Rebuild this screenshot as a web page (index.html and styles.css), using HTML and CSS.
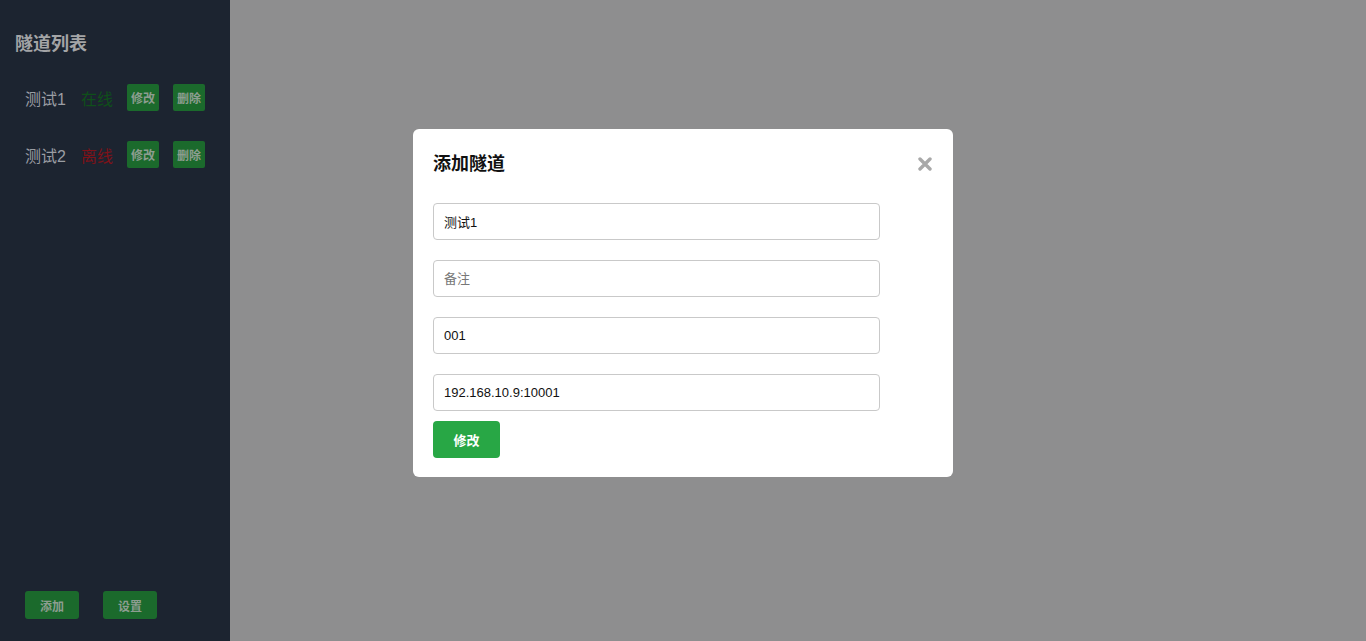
FILE: index.html
```html
<!DOCTYPE html>
<html lang="zh">
<head>
<meta charset="utf-8">
<title>隧道列表</title>
<link rel="stylesheet" href="styles.css">
</head>
<body>
<div class="app">
  <aside class="sidebar">
    <h2 class="side-title">隧道列表</h2>
    <ul class="tunnel-list">
      <li class="tunnel">
        <span class="tunnel-name">测试1</span>
        <span class="status online">在线</span>
        <button class="btn-sm">修改</button>
        <button class="btn-sm">删除</button>
      </li>
      <li class="tunnel">
        <span class="tunnel-name">测试2</span>
        <span class="status offline">离线</span>
        <button class="btn-sm">修改</button>
        <button class="btn-sm">删除</button>
      </li>
    </ul>
    <div class="side-footer">
      <button class="btn-foot">添加</button>
      <button class="btn-foot">设置</button>
    </div>
  </aside>
  <main class="main"></main>
</div>

<div class="overlay">
  <div class="modal">
    <div class="modal-head">
      <h3 class="modal-title">添加隧道</h3>
      <svg class="close" width="14" height="14" viewBox="0 0 14 14" aria-label="关闭">
        <path d="M2 2 L12 12 M12 2 L2 12" stroke="#a8a8a8" stroke-width="3.4" stroke-linecap="round"/>
      </svg>
    </div>
    <form class="modal-form">
      <input class="field" type="text" value="测试1">
      <input class="field" type="text" placeholder="备注">
      <input class="field" type="text" value="001">
      <input class="field" type="text" value="192.168.10.9:10001">
      <button type="button" class="btn-primary">修改</button>
    </form>
  </div>
</div>
</body>
</html>
```
FILE: styles.css
```css
* { box-sizing: border-box; }
html, body { margin: 0; padding: 0; height: 100%; }
body {
  font-family: "Liberation Sans", Arial, "Noto Sans CJK SC", sans-serif;
  background: #8e8e8f;
}
.app {
  display: flex;
  height: 100vh;
}
.sidebar {
  width: 230px;
  background: #1c2430;
  display: flex;
  flex-direction: column;
  padding: 32px 0 22px 15px;
}
.side-title {
  margin: 0;
  font-size: 18px;
  line-height: 24px;
  font-weight: bold;
  color: #a3a4a6;
}
.tunnel-list {
  list-style: none;
  margin: 0;
  padding: 28px 0 0 10px;
  display: flex;
  flex-direction: column;
  gap: 30px;
}
.tunnel {
  display: flex;
  align-items: center;
  height: 27px;
}
.tunnel-name {
  font-size: 16px;
  color: #9a9da3;
  width: 56px;
}
.status {
  font-size: 16px;
  width: 46px;
}
.online { color: #0f4f1a; }
.offline { color: #7d1219; }
.btn-sm {
  width: 32px;
  height: 27px;
  border: none;
  border-radius: 2px;
  background: #1b6a2c;
  color: #8d9d90;
  font-family: inherit;
  font-size: 12px;
  font-weight: bold;
  padding: 0;
  margin-right: 14px;
}
.side-footer {
  margin-top: auto;
  display: flex;
  gap: 24px;
  padding-left: 10px;
}
.btn-foot {
  width: 54px;
  height: 28px;
  border: none;
  border-radius: 3px;
  background: #1b6a2c;
  color: #8d9d90;
  font-family: inherit;
  font-size: 12px;
  font-weight: bold;
  padding: 0;
}
.main {
  flex: 1;
  background: #8e8e8f;
}
.overlay {
  position: fixed;
  inset: 0;
  display: flex;
  justify-content: center;
  align-items: flex-start;
  padding-top: 129px;
}
.modal {
  width: 540px;
  background: #fff;
  border-radius: 6px;
  padding: 20px 20px 19px 20px;
}
.modal-head {
  display: flex;
  align-items: center;
  justify-content: space-between;
  height: 26px;
  margin-bottom: 28px;
}
.modal-title {
  margin: 0;
  font-size: 18px;
  font-weight: bold;
  color: #111;
}
.close {
  display: block;
  margin-top: 4px;
  margin-right: 1px;
}
.modal-form {
  display: flex;
  flex-direction: column;
  align-items: flex-start;
  gap: 20px;
}
.field {
  width: 447px;
  height: 37px;
  border: 1px solid #c9c9c9;
  border-radius: 4px;
  padding: 0 10px;
  font-family: inherit;
  font-size: 13px;
  color: #111;
  outline: none;
}
.field::placeholder { color: #777; }
.btn-primary {
  margin-top: -10px;
  width: 67px;
  height: 37px;
  border: none;
  border-radius: 4px;
  background: #28a745;
  color: #fff;
  font-family: inherit;
  font-size: 13px;
  font-weight: bold;
  padding: 0;
}
```
